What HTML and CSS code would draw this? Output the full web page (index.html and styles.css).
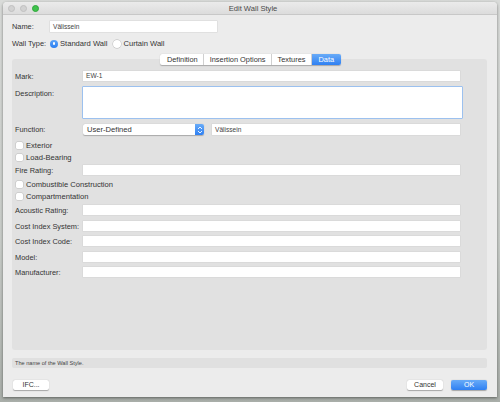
FILE: index.html
```html
<!DOCTYPE html>
<html lang="en">
<head>
    <meta charset="UTF-8">
    <title>Edit Wall Style</title>
    <link rel="stylesheet" href="styles.css">
</head>
<body>
    <div class="window">
        <div class="titlebar">
            <div class="lights">
                <span class="light"></span>
                <span class="light"></span>
                <span class="light green"></span>
            </div>
            <div class="title">Edit Wall Style</div>
        </div>

        <div class="content">
            <div class="top-row name-row">
                <span class="top-label">Name:</span>
                <div class="input name-input">Välissein</div>
            </div>
            <div class="top-row type-row">
                <span class="top-label">Wall Type:</span>
                <span class="radio on"></span><span class="radio-text">Standard Wall</span>
                <span class="radio"></span><span class="radio-text">Curtain Wall</span>
            </div>

            <div class="tabs">
                <span class="tab">Definition</span>
                <span class="tab">Insertion Options</span>
                <span class="tab">Textures</span>
                <span class="tab active">Data</span>
            </div>

            <div class="panel">
                <div class="field mark">
                    <span class="label">Mark:</span>
                    <div class="input">EW-1</div>
                </div>
                <div class="field desc">
                    <span class="label">Description:</span>
                    <div class="textarea"></div>
                </div>
                <div class="field func">
                    <span class="label">Function:</span>
                    <div class="select">
                        <span>User-Defined</span>
                        <span class="stepper">
                            <svg width="6" height="8" viewBox="0 0 6 8"><path d="M1 3 L3 1 L5 3 M1 5 L3 7 L5 5" fill="none" stroke="#fff" stroke-width="0.9"/></svg>
                        </span>
                    </div>
                    <div class="input func-text">Välissein</div>
                </div>
                <div class="check first"><span class="box"></span>Exterior</div>
                <div class="check"><span class="box"></span>Load-Bearing</div>
                <div class="field fire">
                    <span class="label">Fire Rating:</span>
                    <div class="input"></div>
                </div>
                <div class="check first2"><span class="box"></span>Combustible Construction</div>
                <div class="check"><span class="box"></span>Compartmentation</div>
                <div class="field acoustic">
                    <span class="label">Acoustic Rating:</span>
                    <div class="input"></div>
                </div>
                <div class="field gap6">
                    <span class="label">Cost Index System:</span>
                    <div class="input"></div>
                </div>
                <div class="field gap5">
                    <span class="label">Cost Index Code:</span>
                    <div class="input"></div>
                </div>
                <div class="field gap6">
                    <span class="label">Model:</span>
                    <div class="input"></div>
                </div>
                <div class="field gap5">
                    <span class="label">Manufacturer:</span>
                    <div class="input"></div>
                </div>
            </div>

            <div class="status">The name of the Wall Style.</div>

            <div class="buttons">
                <span class="btn">IFC...</span>
                <span class="spacer"></span>
                <span class="btn">Cancel</span>
                <span class="btn primary">OK</span>
            </div>
        </div>
    </div>
</body>
</html>
```

FILE: styles.css
```css
html, body {
    width: 500px;
    height: 402px;
    margin: 0;
    padding: 0;
    overflow: hidden;
}

body {
    background: linear-gradient(to bottom, #d9dbd9 0%, #c9cdc9 60%, #a9aea9 100%);
    font-family: "Liberation Sans", Arial, sans-serif;
    font-size: 7.4px;
    color: #333;
}

.window {
    margin: 2px 3px 0 3px;
    height: 395px;
    background: #ececec;
    border-radius: 4px 4px 0 0;
    box-shadow: 0 1px 3px rgba(0, 0, 0, 0.45);
    display: flex;
    flex-direction: column;
}

/* title bar */
.titlebar {
    height: 12px;
    flex-shrink: 0;
    display: flex;
    align-items: center;
    background: linear-gradient(to bottom, #ebebeb, #dcdcdc);
    border-bottom: 1px solid #c8c8c8;
    border-radius: 4px 4px 0 0;
}
.lights {
    display: flex;
    gap: 5px;
    margin-left: 5px;
}
.light {
    width: 5px;
    height: 5px;
    border-radius: 50%;
    background: #d2d2d2;
    border: 0.5px solid #c0c0c0;
}
.light.green {
    background: #3fc24c;
    border-color: #2ea73a;
}
.title {
    flex: 1;
    text-align: center;
    font-size: 7.6px;
    color: #4a4a4a;
    margin-right: 30px;
}

.content {
    flex: 1;
    display: flex;
    flex-direction: column;
    padding: 0 10px 0 9px;
}

/* name & wall type */
.top-row {
    display: flex;
    align-items: center;
    height: 11px;
    flex-shrink: 0;
}
.name-row {
    margin-top: 6px;
}
.type-row {
    margin-top: 6px;
}
.top-label {
    width: 38px;
}
.top-row .name-input {
    flex: none;
    width: 167px;
    height: 11px;
    line-height: 11px;
}
.radio {
    width: 8px;
    height: 8px;
    border-radius: 50%;
    background: #fff;
    box-shadow: 0 0 0 0.5px #b5b5b5;
    margin-right: 2px;
    position: relative;
}
.radio.on {
    background: linear-gradient(to bottom, #5da4f8, #2a7ef1);
    box-shadow: none;
}
.radio.on::after {
    content: "";
    position: absolute;
    left: 2.7px;
    top: 2.7px;
    width: 2.6px;
    height: 2.6px;
    border-radius: 50%;
    background: #fff;
}
.radio-text {
    font-size: 7.6px;
    margin-right: 6px;
}

/* tabs */
.tabs {
    display: flex;
    flex-shrink: 0;
    align-self: center;
    margin-top: 5px;
    margin-left: 2px;
    height: 11px;
    background: #fff;
    border-radius: 2px;
    box-shadow: 0 0.5px 1px rgba(0, 0, 0, 0.25);
    position: relative;
    z-index: 1;
}
.tab {
    padding: 0 5.5px;
    line-height: 11px;
    font-size: 7.4px;
    color: #333;
    border-left: 0.5px solid #d0d0d0;
}
.tab:first-child {
    border-left: none;
    padding-left: 6.5px;
}
.tab.active {
    background: linear-gradient(to bottom, #68abf8, #2f80f2);
    color: #fff;
    border-radius: 0 2px 2px 0;
    padding: 0 6.5px;
}

/* panel */
.panel {
    margin-top: -6px;
    height: 291px;
    flex-shrink: 0;
    box-sizing: border-box;
    background: #e1e1e1;
    border-radius: 3px;
    padding: 12px 27px 0 3px;
}
.field {
    display: flex;
    height: 10px;
    align-items: center;
}
.label {
    width: 68px;
    flex-shrink: 0;
}
.input {
    flex: 1;
    height: 10px;
    background: #fff;
    box-shadow: 0 0 0 0.5px #d4d4d4;
    line-height: 10px;
    padding-left: 3px;
    font-size: 6.6px;
    color: #444;
    box-sizing: border-box;
}
.desc {
    margin-top: 5px;
    height: 33px;
    align-items: flex-start;
    margin-right: -3px;
}
.desc .label {
    margin-top: 3px;
    width: 67px;
}
.textarea {
    flex: 1;
    height: 33px;
    box-sizing: border-box;
    background: #fff;
    border: 1.5px solid #9cc1ef;
    border-radius: 1px;
}
.func {
    margin-top: 5px;
    height: 11px;
}
.select {
    width: 121px;
    height: 11px;
    display: flex;
    align-items: center;
    justify-content: space-between;
    background: #fff;
    border-radius: 2px;
    box-shadow: 0 0.5px 1px rgba(0, 0, 0, 0.25);
    padding-left: 4px;
    box-sizing: border-box;
    font-size: 7.6px;
    margin-right: 8px;
}
.stepper {
    width: 9px;
    height: 11px;
    background: linear-gradient(to bottom, #68abf8, #2f80f2);
    border-radius: 0 2px 2px 0;
    display: flex;
    align-items: center;
    justify-content: center;
}
.func-text {
    height: 11px;
    line-height: 11px;
}
.check {
    display: flex;
    align-items: center;
    height: 11.5px;
    padding-left: 1px;
    font-size: 7.6px;
}
.check.first {
    margin-top: 5px;
}
.check.first2 {
    margin-top: 4px;
}
.box {
    width: 7px;
    height: 7px;
    background: #fff;
    border-radius: 1.5px;
    box-shadow: 0 0 0 0.5px #bdbdbd;
    margin-right: 3px;
}
.fire {
    margin-top: 2px;
}
.acoustic {
    margin-top: 3px;
}
.gap6 {
    margin-top: 6px;
}
.gap5 {
    margin-top: 5px;
}

/* status line */
.status {
    margin-top: 8px;
    height: 10px;
    flex-shrink: 0;
    line-height: 10px;
    background: #e0e0e0;
    border-radius: 2px;
    padding-left: 3px;
    font-size: 5.6px;
    color: #444;
}

/* bottom buttons */
.buttons {
    display: flex;
    align-items: center;
    margin-top: 12px;
    padding: 0 0 0 1px;
}
.spacer {
    flex: 1;
}
.btn {
    width: 36px;
    height: 10px;
    line-height: 10px;
    text-align: center;
    background: #fff;
    border-radius: 2px;
    box-shadow: 0 0.5px 1px rgba(0, 0, 0, 0.3);
    font-size: 7px;
    color: #333;
    margin-left: 8px;
}
.btn:first-child {
    margin-left: 0;
}
.btn.primary {
    background: linear-gradient(to bottom, #68abf8, #2f80f2);
    color: #fff;
}
```
